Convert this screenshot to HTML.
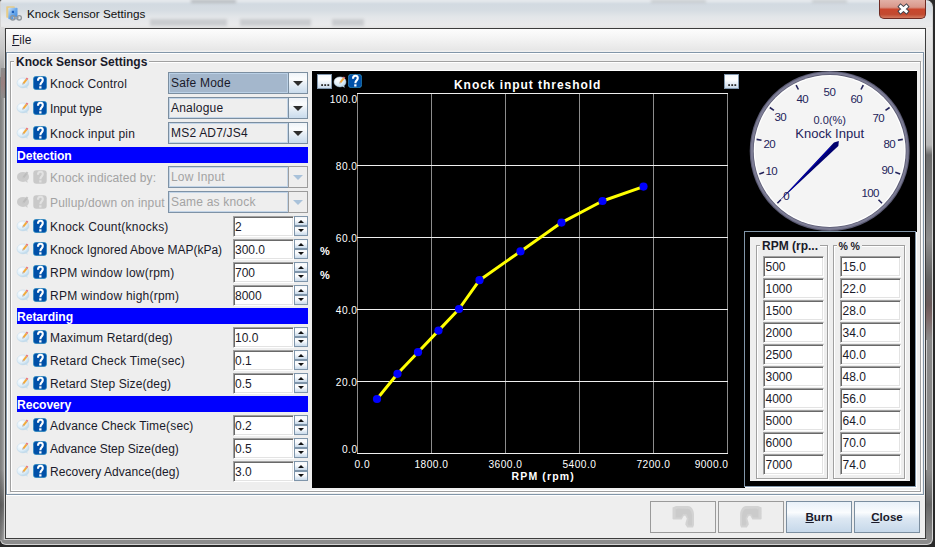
<!DOCTYPE html>
<html><head><meta charset="utf-8">
<style>
*{box-sizing:border-box;margin:0;padding:0}
body{width:935px;height:547px;overflow:hidden;position:relative;background:#2a2a2a;font-family:"Liberation Sans",sans-serif;font-size:12px;color:#000}
.a{position:absolute}
.t{position:absolute;white-space:nowrap;line-height:1}
/* frame */
#frame{left:0;top:0;width:933px;height:545px;border-radius:2px 7px 6px 6px;border:1px solid #d4d4d4;border-top-color:#e4e8ec;background:linear-gradient(180deg,#e4e8ec 0px,#d2dae1 3px,#d5dce2 9px,#e3e6e9 16px,#e9eaeb 24px,#e4e4e4 27px,#9a9a9a 34px,#8c8c8c 80px,#8a8a8a 400px,#8c8c8c 545px)}
#client{left:5px;top:28px;width:921px;height:511px;border:1px solid #3c3c3c;background:#eeeeee}
#menubar{left:6px;top:29px;width:919px;height:23px;background:linear-gradient(180deg,#fdfdfd 0%,#f4f4f4 40%,#e7e7e7 90%,#f2f2f2 100%)}
#cpane{left:6px;top:52px;width:918px;height:443px;border:1px solid #8296a9;background:#eeeeee;box-shadow:0 1px 0 #fff}
#cpane:before{content:"";position:absolute;left:0;top:0;right:0;bottom:0;border-left:1px solid #fff;border-top:1px solid #fff}
.tb{position:absolute;border:1px solid #a0a0a0;box-shadow:1px 1px 0 #fff, inset 1px 1px 0 #fff}
.hdr{position:absolute;left:17px;width:291px;height:16px;background:#0000ff;color:#fff;font-weight:bold;font-size:12.2px;line-height:18px;padding-left:0;letter-spacing:-0.1px}
.lbl{position:absolute;left:50px;white-space:nowrap;font-size:12px;line-height:14px;color:#1a1a2a}
.lbl.dis{color:#a3a3a3}
.combo{position:absolute;left:168px;width:140px;height:22px;border:1px solid #7b8ea0;background:#eeeeee}
.combo .in{position:absolute;left:0;top:0;width:119px;height:20px;border:1px solid #c3d5e8}
.combo.sel .in{background:#a4b7cc;border-color:#bad0e6}
.combo .txt{position:absolute;left:1px;top:2px;font-size:12px;line-height:14px;letter-spacing:0.2px;white-space:nowrap;color:#1a1a2a}
.combo .btn{position:absolute;left:119px;top:0;width:19px;height:20px;border-left:1px solid #7b8ea0;background:linear-gradient(180deg,#eef3f8 0%,#fbfcfd 30%,#e3ecf5 60%,#c9dbec 100%)}
.combo .btn:after{content:"";position:absolute;left:4px;top:8px;border-left:5px solid transparent;border-right:5px solid transparent;border-top:5px solid #2d2d2d}
.combo.dis{border:none;background:transparent}
.combo.dis .in{left:0;top:0;width:120px;height:22px;border:1px solid #7e92a6;border-right:none;box-shadow:inset 1px 1px 0 #c3d5e8,inset -1px -1px 0 #c3d5e8;background:#eeeeee}
.combo.dis .btn{left:120px;top:0;width:20px;height:22px;border:1px solid #9c9c9c;background:#eeeeee}
.combo.dis .btn:after{left:4px;top:8px}
.combo.dis .txt{left:2px;top:3px}
.combo.dis .btn:after{border-top-color:#a9c2da}
.combo.dis .txt{color:#a3a3a3}
.fld{position:absolute;left:233px;width:61px;height:21px;background:#fff;border:1px solid;border-color:#a0a0a0 #ffffff #ffffff #a0a0a0;box-shadow:inset 1px 1px 0 #696969,inset -1px -1px 0 #e3e3e3}
.fld .txt{position:absolute;left:1px;top:3px;font-size:12px;line-height:14px;color:#1a1a2a}
.spin{position:absolute;left:294px;width:14px;height:20px}
.spin .u,.spin .d{position:absolute;left:0;width:14px;height:10px;border:1px solid #7f95aa;background:linear-gradient(180deg,#f4f7fa 0%,#fdfdfe 35%,#e2ebf4 70%,#c9daea 100%)}
.spin .u{top:0}
.spin .d{top:10px}
.spin .u:after{content:"";position:absolute;left:3px;top:3px;border-left:3px solid transparent;border-right:3px solid transparent;border-bottom:3px solid #111}
.spin .d:after{content:"";position:absolute;left:3px;top:2px;border-left:3px solid transparent;border-right:3px solid transparent;border-top:3px solid #111}
.ic{position:absolute;left:17px;width:13px;height:13px}
.hp{position:absolute;left:33px;width:14px;height:14px}
.cell{position:absolute;width:61px;height:21px;background:#fff;border:1px solid;border-color:#a0a0a0 #ffffff #ffffff #a0a0a0;box-shadow:inset 1px 1px 0 #696969,inset -1px -1px 0 #e3e3e3}
.cell .txt{position:absolute;left:1.5px;top:3px;font-size:12px;line-height:14px;color:#1a1a2a}
.btn2{position:absolute;top:501px;width:66px;height:32px;border:1px solid #7b8ea0;background:linear-gradient(180deg,#e9f1f9 0%,#fafcfe 35%,#dde8f3 55%,#c6d8ea 100%);text-align:center;font-weight:bold;font-size:11.6px;line-height:30px;color:#1a1a2a}
.btn2.dis{border-color:#9a9a9a;background:#eeeeee}
.ax{position:absolute;color:#fff;font-size:10.2px;line-height:10px;letter-spacing:0.45px;white-space:nowrap}
.gl{position:absolute;color:#23235a;font-size:11px;line-height:11px;white-space:nowrap}
</style></head><body>

<div id="frame" class="a"></div>
<div class="a" style="left:191px;top:0px;width:45px;height:3px;background:#a8acb0;filter:blur(1.5px);opacity:0.8"></div>
<div class="a" style="left:651px;top:0px;width:55px;height:3px;background:#b4b8bc;filter:blur(1.5px);opacity:0.6"></div>
<div class="a" style="left:812px;top:0px;width:35px;height:3px;background:#b4b8bc;filter:blur(1.5px);opacity:0.6"></div>
<div class="a" style="left:150px;top:19px;width:77px;height:7px;background:#c0c3c6;filter:blur(1.5px);opacity:0.75"></div>
<div class="a" style="left:240px;top:19px;width:71px;height:7px;background:#c0c3c6;filter:blur(1.5px);opacity:0.75"></div>
<div class="a" style="left:332px;top:19px;width:32px;height:7px;background:#c0c3c6;filter:blur(1.5px);opacity:0.75"></div>
<svg class="a" style="left:5px;top:5px" width="18" height="18" viewBox="0 0 18 18"><defs><linearGradient id="tig" x1="0" y1="0" x2="1" y2="1"><stop offset="0" stop-color="#cfe4fa"/><stop offset="0.5" stop-color="#6aa8ea"/><stop offset="1" stop-color="#3d86dc"/></linearGradient></defs><rect x="1.2" y="1.3" width="8.6" height="11.4" rx="0.8" fill="#e9c878" opacity=".85"/><rect x="3.3" y="2.8" width="9.2" height="11.4" rx="0.8" fill="url(#tig)"/><rect x="6.8" y="5.8" width="2.2" height="2.2" fill="#1f5fb8"/><path d="M8 12.8 L14 12.8" stroke="#b8bcc0" stroke-width="1.8"/><circle cx="7.8" cy="12.8" r="2.2" fill="none" stroke="#8f969c" stroke-width="1.4"/><circle cx="14.2" cy="12.8" r="2.2" fill="none" stroke="#8f969c" stroke-width="1.4"/></svg>
<div class="t" style="left:27px;top:7px;font-size:11.7px;line-height:14px;color:#101010">Knock Sensor Settings</div>
<div class="a" style="left:879px;top:0;width:47px;height:19px;border:1px solid #6e2a22;border-top:none;border-radius:0 0 5px 5px;background:linear-gradient(180deg,#e2b0a6 0%,#d9978a 40%,#c9462d 52%,#c24a30 80%,#d27a60 100%)"></div>
<svg class="a" style="left:893px;top:0px" width="21" height="18" viewBox="0 0 21 18"><path d="M5.9 5.0 L15.1 13.0 M15.1 5.0 L5.9 13.0" stroke="#3a3f4a" stroke-width="4.6" stroke-linecap="butt"/><path d="M6.6 5.6 L14.4 12.4 M14.4 5.6 L6.6 12.4" stroke="#ffffff" stroke-width="2.8" stroke-linecap="butt"/></svg>
<div class="a" style="left:4px;top:28px;width:923px;height:512px;border:1px solid #cfcfcf;border-top:none"></div>
<div class="a" style="left:0px;top:27px;width:4px;height:60px;background:linear-gradient(180deg,#dadada,#c4c4c4 40%,#8c8c8c)"></div>
<div class="a" style="left:926px;top:27px;width:6px;height:213px;background:linear-gradient(180deg,#ececec 0px,#d0d0d0 60px,#b8b8b8 118px,#6c6c6c 128px,#7a7a7a 170px,#8c8c8c 213px)"></div>
<div class="a" style="left:926px;top:240px;width:6px;height:100px;background:linear-gradient(180deg,#8c8c8c,#626262 40%,#6a5a5a 65%,#7a6464 75%,#8c8c8c)"></div>
<div class="a" style="left:926px;top:470px;width:6px;height:69px;background:linear-gradient(180deg,#8c8c8c,#666 50%,#8c8c8c)"></div>
<div class="a" style="left:0px;top:77px;width:4px;height:463px;background:linear-gradient(90deg,#7c7c7c,#8a8a8a 50%,#a8a8a8)"></div>
<div class="a" style="left:0px;top:470px;width:4px;height:70px;background:linear-gradient(180deg,rgba(60,60,60,0),rgba(60,60,60,.55) 50%,rgba(60,60,60,0))"></div>
<div class="a" style="left:1px;top:68px;width:4px;height:30px;background:linear-gradient(180deg,#8c8c8c,#9a8080 50%,#8c8c8c)"></div>
<div id="client" class="a"></div>
<div id="menubar" class="a"></div>
<div class="t" style="left:12px;top:33px;font-size:12px;line-height:14px;color:#1a1a2a"><u>F</u>ile</div>
<div id="cpane" class="a"></div>
<div class="tb" style="left:10px;top:61px;width:911px;height:431px"></div>
<div class="a" style="left:11px;top:490px;width:909px;height:1px;background:#fff"></div>
<div class="t" style="left:14px;top:55px;padding:0 2px;background:#eeeeee;font-weight:bold;font-size:12px;line-height:14px;color:#1a1a2a">Knock Sensor Settings</div>
<svg class="a" style="left:16px;top:76px" width="14" height="14" viewBox="0 0 14 14"><defs><radialGradient id="bg16_76" cx="0.35" cy="0.3" r="0.8"><stop offset="0" stop-color="#ffffff"/><stop offset="0.55" stop-color="#e0eff9"/><stop offset="1" stop-color="#afd0e6"/></radialGradient></defs><ellipse cx="7" cy="6.9" rx="6" ry="5" fill="url(#bg16_76)" stroke="#c2d9e8" stroke-width="0.5"/><path d="M9.4 11 L11.5 13 L11.3 10.4Z" fill="#c9e0ee"/><g transform="translate(9.5 5.2) scale(0.85) translate(-9.5 -5.2)"><path d="M6.17 6.95 L8.03 8.45 L11.73 3.85 L9.87 2.35Z" fill="#f3aa3c"/><path d="M6.17 6.95 L8.03 8.45 L5.8 9.3Z" fill="#b0a090"/><path d="M9.87 2.35 L11.73 3.85 L12.86 2.45 L11.0 0.95Z" fill="#e8707a"/></g></svg>
<svg class="a" style="left:33px;top:76px" width="14" height="14" viewBox="0 0 14 14"><rect x="0.3" y="0.3" width="13.4" height="13.4" rx="3" fill="#0050a8" stroke="#3aa0c8" stroke-width="0.6"/><path d="M5 4.7 C5 2.6 6 1.7 7.4 1.7 C8.9 1.7 9.8 2.7 9.8 4.1 C9.8 5.4 9 6.1 8.3 6.8 C7.7 7.4 7.4 8 7.4 9.3" stroke="#ffffff" stroke-width="2.1" fill="none"/><rect x="6.2" y="10.3" width="2.3" height="2.2" fill="#ffffff"/></svg>
<div class="lbl" style="top:77px;letter-spacing:0.12px">Knock Control</div>
<div class="combo sel" style="top:72px"><div class="in"><div class="txt">Safe Mode</div></div><div class="btn"></div></div>
<svg class="a" style="left:16px;top:101px" width="14" height="14" viewBox="0 0 14 14"><defs><radialGradient id="bg16_101" cx="0.35" cy="0.3" r="0.8"><stop offset="0" stop-color="#ffffff"/><stop offset="0.55" stop-color="#e0eff9"/><stop offset="1" stop-color="#afd0e6"/></radialGradient></defs><ellipse cx="7" cy="6.9" rx="6" ry="5" fill="url(#bg16_101)" stroke="#c2d9e8" stroke-width="0.5"/><path d="M9.4 11 L11.5 13 L11.3 10.4Z" fill="#c9e0ee"/><g transform="translate(9.5 5.2) scale(0.85) translate(-9.5 -5.2)"><path d="M6.17 6.95 L8.03 8.45 L11.73 3.85 L9.87 2.35Z" fill="#f3aa3c"/><path d="M6.17 6.95 L8.03 8.45 L5.8 9.3Z" fill="#b0a090"/><path d="M9.87 2.35 L11.73 3.85 L12.86 2.45 L11.0 0.95Z" fill="#e8707a"/></g></svg>
<svg class="a" style="left:33px;top:101px" width="14" height="14" viewBox="0 0 14 14"><rect x="0.3" y="0.3" width="13.4" height="13.4" rx="3" fill="#0050a8" stroke="#3aa0c8" stroke-width="0.6"/><path d="M5 4.7 C5 2.6 6 1.7 7.4 1.7 C8.9 1.7 9.8 2.7 9.8 4.1 C9.8 5.4 9 6.1 8.3 6.8 C7.7 7.4 7.4 8 7.4 9.3" stroke="#ffffff" stroke-width="2.1" fill="none"/><rect x="6.2" y="10.3" width="2.3" height="2.2" fill="#ffffff"/></svg>
<div class="lbl" style="top:102px;letter-spacing:-0.07px">Input type</div>
<div class="combo " style="top:97px"><div class="in"><div class="txt">Analogue</div></div><div class="btn"></div></div>
<svg class="a" style="left:16px;top:126px" width="14" height="14" viewBox="0 0 14 14"><defs><radialGradient id="bg16_126" cx="0.35" cy="0.3" r="0.8"><stop offset="0" stop-color="#ffffff"/><stop offset="0.55" stop-color="#e0eff9"/><stop offset="1" stop-color="#afd0e6"/></radialGradient></defs><ellipse cx="7" cy="6.9" rx="6" ry="5" fill="url(#bg16_126)" stroke="#c2d9e8" stroke-width="0.5"/><path d="M9.4 11 L11.5 13 L11.3 10.4Z" fill="#c9e0ee"/><g transform="translate(9.5 5.2) scale(0.85) translate(-9.5 -5.2)"><path d="M6.17 6.95 L8.03 8.45 L11.73 3.85 L9.87 2.35Z" fill="#f3aa3c"/><path d="M6.17 6.95 L8.03 8.45 L5.8 9.3Z" fill="#b0a090"/><path d="M9.87 2.35 L11.73 3.85 L12.86 2.45 L11.0 0.95Z" fill="#e8707a"/></g></svg>
<svg class="a" style="left:33px;top:126px" width="14" height="14" viewBox="0 0 14 14"><rect x="0.3" y="0.3" width="13.4" height="13.4" rx="3" fill="#0050a8" stroke="#3aa0c8" stroke-width="0.6"/><path d="M5 4.7 C5 2.6 6 1.7 7.4 1.7 C8.9 1.7 9.8 2.7 9.8 4.1 C9.8 5.4 9 6.1 8.3 6.8 C7.7 7.4 7.4 8 7.4 9.3" stroke="#ffffff" stroke-width="2.1" fill="none"/><rect x="6.2" y="10.3" width="2.3" height="2.2" fill="#ffffff"/></svg>
<div class="lbl" style="top:127px;letter-spacing:0.2px">Knock input pin</div>
<div class="combo " style="top:122px"><div class="in"><div class="txt">MS2 AD7/JS4</div></div><div class="btn"></div></div>
<div class="hdr" style="top:147px">Detection</div>
<svg class="a" style="left:16px;top:170px" width="14" height="14" viewBox="0 0 14 14"><ellipse cx="7" cy="6.9" rx="6" ry="5" fill="#cbcbcb"/><path d="M9.4 11 L11.5 13 L11.3 10.4Z" fill="#cbcbcb"/><g transform="translate(9.5 5.2) scale(0.85) translate(-9.5 -5.2)"><path d="M6.17 6.95 L8.03 8.45 L11.73 3.85 L9.87 2.35Z" fill="#bcbcbc"/><path d="M6.17 6.95 L8.03 8.45 L5.8 9.3Z" fill="#c4c4c4"/><path d="M9.87 2.35 L11.73 3.85 L12.86 2.45 L11.0 0.95Z" fill="#c2c2c2"/></g></svg>
<svg class="a" style="left:33px;top:170px" width="14" height="14" viewBox="0 0 14 14"><rect x="0.3" y="0.3" width="13.4" height="13.4" rx="3" fill="#c9c9c9"/><path d="M5 4.7 C5 2.6 6 1.7 7.4 1.7 C8.9 1.7 9.8 2.7 9.8 4.1 C9.8 5.4 9 6.1 8.3 6.8 C7.7 7.4 7.4 8 7.4 9.3" stroke="#e2e2e2" stroke-width="2.1" fill="none"/><rect x="6.2" y="10.3" width="2.3" height="2.2" fill="#e2e2e2"/></svg>
<div class="lbl dis" style="top:171px;letter-spacing:0.11px">Knock indicated by:</div>
<div class="combo dis" style="top:166px"><div class="in"><div class="txt">Low Input</div></div><div class="btn"></div></div>
<svg class="a" style="left:16px;top:195px" width="14" height="14" viewBox="0 0 14 14"><ellipse cx="7" cy="6.9" rx="6" ry="5" fill="#cbcbcb"/><path d="M9.4 11 L11.5 13 L11.3 10.4Z" fill="#cbcbcb"/><g transform="translate(9.5 5.2) scale(0.85) translate(-9.5 -5.2)"><path d="M6.17 6.95 L8.03 8.45 L11.73 3.85 L9.87 2.35Z" fill="#bcbcbc"/><path d="M6.17 6.95 L8.03 8.45 L5.8 9.3Z" fill="#c4c4c4"/><path d="M9.87 2.35 L11.73 3.85 L12.86 2.45 L11.0 0.95Z" fill="#c2c2c2"/></g></svg>
<svg class="a" style="left:33px;top:195px" width="14" height="14" viewBox="0 0 14 14"><rect x="0.3" y="0.3" width="13.4" height="13.4" rx="3" fill="#c9c9c9"/><path d="M5 4.7 C5 2.6 6 1.7 7.4 1.7 C8.9 1.7 9.8 2.7 9.8 4.1 C9.8 5.4 9 6.1 8.3 6.8 C7.7 7.4 7.4 8 7.4 9.3" stroke="#e2e2e2" stroke-width="2.1" fill="none"/><rect x="6.2" y="10.3" width="2.3" height="2.2" fill="#e2e2e2"/></svg>
<div class="lbl dis" style="top:196px;letter-spacing:0.17px">Pullup/down on input</div>
<div class="combo dis" style="top:191px"><div class="in"><div class="txt">Same as knock</div></div><div class="btn"></div></div>
<svg class="a" style="left:16px;top:219px" width="14" height="14" viewBox="0 0 14 14"><defs><radialGradient id="bg16_219" cx="0.35" cy="0.3" r="0.8"><stop offset="0" stop-color="#ffffff"/><stop offset="0.55" stop-color="#e0eff9"/><stop offset="1" stop-color="#afd0e6"/></radialGradient></defs><ellipse cx="7" cy="6.9" rx="6" ry="5" fill="url(#bg16_219)" stroke="#c2d9e8" stroke-width="0.5"/><path d="M9.4 11 L11.5 13 L11.3 10.4Z" fill="#c9e0ee"/><g transform="translate(9.5 5.2) scale(0.85) translate(-9.5 -5.2)"><path d="M6.17 6.95 L8.03 8.45 L11.73 3.85 L9.87 2.35Z" fill="#f3aa3c"/><path d="M6.17 6.95 L8.03 8.45 L5.8 9.3Z" fill="#b0a090"/><path d="M9.87 2.35 L11.73 3.85 L12.86 2.45 L11.0 0.95Z" fill="#e8707a"/></g></svg>
<svg class="a" style="left:33px;top:219px" width="14" height="14" viewBox="0 0 14 14"><rect x="0.3" y="0.3" width="13.4" height="13.4" rx="3" fill="#0050a8" stroke="#3aa0c8" stroke-width="0.6"/><path d="M5 4.7 C5 2.6 6 1.7 7.4 1.7 C8.9 1.7 9.8 2.7 9.8 4.1 C9.8 5.4 9 6.1 8.3 6.8 C7.7 7.4 7.4 8 7.4 9.3" stroke="#ffffff" stroke-width="2.1" fill="none"/><rect x="6.2" y="10.3" width="2.3" height="2.2" fill="#ffffff"/></svg>
<div class="lbl" style="top:220px;letter-spacing:0.24px">Knock Count(knocks)</div>
<div class="fld" style="top:216px"><div class="txt">2</div></div>
<div class="spin" style="top:216px"><div class="u"></div><div class="d"></div></div>
<svg class="a" style="left:16px;top:242px" width="14" height="14" viewBox="0 0 14 14"><defs><radialGradient id="bg16_242" cx="0.35" cy="0.3" r="0.8"><stop offset="0" stop-color="#ffffff"/><stop offset="0.55" stop-color="#e0eff9"/><stop offset="1" stop-color="#afd0e6"/></radialGradient></defs><ellipse cx="7" cy="6.9" rx="6" ry="5" fill="url(#bg16_242)" stroke="#c2d9e8" stroke-width="0.5"/><path d="M9.4 11 L11.5 13 L11.3 10.4Z" fill="#c9e0ee"/><g transform="translate(9.5 5.2) scale(0.85) translate(-9.5 -5.2)"><path d="M6.17 6.95 L8.03 8.45 L11.73 3.85 L9.87 2.35Z" fill="#f3aa3c"/><path d="M6.17 6.95 L8.03 8.45 L5.8 9.3Z" fill="#b0a090"/><path d="M9.87 2.35 L11.73 3.85 L12.86 2.45 L11.0 0.95Z" fill="#e8707a"/></g></svg>
<svg class="a" style="left:33px;top:242px" width="14" height="14" viewBox="0 0 14 14"><rect x="0.3" y="0.3" width="13.4" height="13.4" rx="3" fill="#0050a8" stroke="#3aa0c8" stroke-width="0.6"/><path d="M5 4.7 C5 2.6 6 1.7 7.4 1.7 C8.9 1.7 9.8 2.7 9.8 4.1 C9.8 5.4 9 6.1 8.3 6.8 C7.7 7.4 7.4 8 7.4 9.3" stroke="#ffffff" stroke-width="2.1" fill="none"/><rect x="6.2" y="10.3" width="2.3" height="2.2" fill="#ffffff"/></svg>
<div class="lbl" style="top:243px;letter-spacing:0.0px">Knock Ignored Above MAP(kPa)</div>
<div class="fld" style="top:239px"><div class="txt">300.0</div></div>
<div class="spin" style="top:239px"><div class="u"></div><div class="d"></div></div>
<svg class="a" style="left:16px;top:265px" width="14" height="14" viewBox="0 0 14 14"><defs><radialGradient id="bg16_265" cx="0.35" cy="0.3" r="0.8"><stop offset="0" stop-color="#ffffff"/><stop offset="0.55" stop-color="#e0eff9"/><stop offset="1" stop-color="#afd0e6"/></radialGradient></defs><ellipse cx="7" cy="6.9" rx="6" ry="5" fill="url(#bg16_265)" stroke="#c2d9e8" stroke-width="0.5"/><path d="M9.4 11 L11.5 13 L11.3 10.4Z" fill="#c9e0ee"/><g transform="translate(9.5 5.2) scale(0.85) translate(-9.5 -5.2)"><path d="M6.17 6.95 L8.03 8.45 L11.73 3.85 L9.87 2.35Z" fill="#f3aa3c"/><path d="M6.17 6.95 L8.03 8.45 L5.8 9.3Z" fill="#b0a090"/><path d="M9.87 2.35 L11.73 3.85 L12.86 2.45 L11.0 0.95Z" fill="#e8707a"/></g></svg>
<svg class="a" style="left:33px;top:265px" width="14" height="14" viewBox="0 0 14 14"><rect x="0.3" y="0.3" width="13.4" height="13.4" rx="3" fill="#0050a8" stroke="#3aa0c8" stroke-width="0.6"/><path d="M5 4.7 C5 2.6 6 1.7 7.4 1.7 C8.9 1.7 9.8 2.7 9.8 4.1 C9.8 5.4 9 6.1 8.3 6.8 C7.7 7.4 7.4 8 7.4 9.3" stroke="#ffffff" stroke-width="2.1" fill="none"/><rect x="6.2" y="10.3" width="2.3" height="2.2" fill="#ffffff"/></svg>
<div class="lbl" style="top:266px;letter-spacing:0.24px">RPM window low(rpm)</div>
<div class="fld" style="top:262px"><div class="txt">700</div></div>
<div class="spin" style="top:262px"><div class="u"></div><div class="d"></div></div>
<svg class="a" style="left:16px;top:288px" width="14" height="14" viewBox="0 0 14 14"><defs><radialGradient id="bg16_288" cx="0.35" cy="0.3" r="0.8"><stop offset="0" stop-color="#ffffff"/><stop offset="0.55" stop-color="#e0eff9"/><stop offset="1" stop-color="#afd0e6"/></radialGradient></defs><ellipse cx="7" cy="6.9" rx="6" ry="5" fill="url(#bg16_288)" stroke="#c2d9e8" stroke-width="0.5"/><path d="M9.4 11 L11.5 13 L11.3 10.4Z" fill="#c9e0ee"/><g transform="translate(9.5 5.2) scale(0.85) translate(-9.5 -5.2)"><path d="M6.17 6.95 L8.03 8.45 L11.73 3.85 L9.87 2.35Z" fill="#f3aa3c"/><path d="M6.17 6.95 L8.03 8.45 L5.8 9.3Z" fill="#b0a090"/><path d="M9.87 2.35 L11.73 3.85 L12.86 2.45 L11.0 0.95Z" fill="#e8707a"/></g></svg>
<svg class="a" style="left:33px;top:288px" width="14" height="14" viewBox="0 0 14 14"><rect x="0.3" y="0.3" width="13.4" height="13.4" rx="3" fill="#0050a8" stroke="#3aa0c8" stroke-width="0.6"/><path d="M5 4.7 C5 2.6 6 1.7 7.4 1.7 C8.9 1.7 9.8 2.7 9.8 4.1 C9.8 5.4 9 6.1 8.3 6.8 C7.7 7.4 7.4 8 7.4 9.3" stroke="#ffffff" stroke-width="2.1" fill="none"/><rect x="6.2" y="10.3" width="2.3" height="2.2" fill="#ffffff"/></svg>
<div class="lbl" style="top:289px;letter-spacing:0.23px">RPM window high(rpm)</div>
<div class="fld" style="top:285px"><div class="txt">8000</div></div>
<div class="spin" style="top:285px"><div class="u"></div><div class="d"></div></div>
<div class="hdr" style="top:308px">Retarding</div>
<svg class="a" style="left:16px;top:330px" width="14" height="14" viewBox="0 0 14 14"><defs><radialGradient id="bg16_330" cx="0.35" cy="0.3" r="0.8"><stop offset="0" stop-color="#ffffff"/><stop offset="0.55" stop-color="#e0eff9"/><stop offset="1" stop-color="#afd0e6"/></radialGradient></defs><ellipse cx="7" cy="6.9" rx="6" ry="5" fill="url(#bg16_330)" stroke="#c2d9e8" stroke-width="0.5"/><path d="M9.4 11 L11.5 13 L11.3 10.4Z" fill="#c9e0ee"/><g transform="translate(9.5 5.2) scale(0.85) translate(-9.5 -5.2)"><path d="M6.17 6.95 L8.03 8.45 L11.73 3.85 L9.87 2.35Z" fill="#f3aa3c"/><path d="M6.17 6.95 L8.03 8.45 L5.8 9.3Z" fill="#b0a090"/><path d="M9.87 2.35 L11.73 3.85 L12.86 2.45 L11.0 0.95Z" fill="#e8707a"/></g></svg>
<svg class="a" style="left:33px;top:330px" width="14" height="14" viewBox="0 0 14 14"><rect x="0.3" y="0.3" width="13.4" height="13.4" rx="3" fill="#0050a8" stroke="#3aa0c8" stroke-width="0.6"/><path d="M5 4.7 C5 2.6 6 1.7 7.4 1.7 C8.9 1.7 9.8 2.7 9.8 4.1 C9.8 5.4 9 6.1 8.3 6.8 C7.7 7.4 7.4 8 7.4 9.3" stroke="#ffffff" stroke-width="2.1" fill="none"/><rect x="6.2" y="10.3" width="2.3" height="2.2" fill="#ffffff"/></svg>
<div class="lbl" style="top:331px;letter-spacing:0.18px">Maximum Retard(deg)</div>
<div class="fld" style="top:327px"><div class="txt">10.0</div></div>
<div class="spin" style="top:327px"><div class="u"></div><div class="d"></div></div>
<svg class="a" style="left:16px;top:353px" width="14" height="14" viewBox="0 0 14 14"><defs><radialGradient id="bg16_353" cx="0.35" cy="0.3" r="0.8"><stop offset="0" stop-color="#ffffff"/><stop offset="0.55" stop-color="#e0eff9"/><stop offset="1" stop-color="#afd0e6"/></radialGradient></defs><ellipse cx="7" cy="6.9" rx="6" ry="5" fill="url(#bg16_353)" stroke="#c2d9e8" stroke-width="0.5"/><path d="M9.4 11 L11.5 13 L11.3 10.4Z" fill="#c9e0ee"/><g transform="translate(9.5 5.2) scale(0.85) translate(-9.5 -5.2)"><path d="M6.17 6.95 L8.03 8.45 L11.73 3.85 L9.87 2.35Z" fill="#f3aa3c"/><path d="M6.17 6.95 L8.03 8.45 L5.8 9.3Z" fill="#b0a090"/><path d="M9.87 2.35 L11.73 3.85 L12.86 2.45 L11.0 0.95Z" fill="#e8707a"/></g></svg>
<svg class="a" style="left:33px;top:353px" width="14" height="14" viewBox="0 0 14 14"><rect x="0.3" y="0.3" width="13.4" height="13.4" rx="3" fill="#0050a8" stroke="#3aa0c8" stroke-width="0.6"/><path d="M5 4.7 C5 2.6 6 1.7 7.4 1.7 C8.9 1.7 9.8 2.7 9.8 4.1 C9.8 5.4 9 6.1 8.3 6.8 C7.7 7.4 7.4 8 7.4 9.3" stroke="#ffffff" stroke-width="2.1" fill="none"/><rect x="6.2" y="10.3" width="2.3" height="2.2" fill="#ffffff"/></svg>
<div class="lbl" style="top:354px;letter-spacing:0.26px">Retard Check Time(sec)</div>
<div class="fld" style="top:350px"><div class="txt">0.1</div></div>
<div class="spin" style="top:350px"><div class="u"></div><div class="d"></div></div>
<svg class="a" style="left:16px;top:376px" width="14" height="14" viewBox="0 0 14 14"><defs><radialGradient id="bg16_376" cx="0.35" cy="0.3" r="0.8"><stop offset="0" stop-color="#ffffff"/><stop offset="0.55" stop-color="#e0eff9"/><stop offset="1" stop-color="#afd0e6"/></radialGradient></defs><ellipse cx="7" cy="6.9" rx="6" ry="5" fill="url(#bg16_376)" stroke="#c2d9e8" stroke-width="0.5"/><path d="M9.4 11 L11.5 13 L11.3 10.4Z" fill="#c9e0ee"/><g transform="translate(9.5 5.2) scale(0.85) translate(-9.5 -5.2)"><path d="M6.17 6.95 L8.03 8.45 L11.73 3.85 L9.87 2.35Z" fill="#f3aa3c"/><path d="M6.17 6.95 L8.03 8.45 L5.8 9.3Z" fill="#b0a090"/><path d="M9.87 2.35 L11.73 3.85 L12.86 2.45 L11.0 0.95Z" fill="#e8707a"/></g></svg>
<svg class="a" style="left:33px;top:376px" width="14" height="14" viewBox="0 0 14 14"><rect x="0.3" y="0.3" width="13.4" height="13.4" rx="3" fill="#0050a8" stroke="#3aa0c8" stroke-width="0.6"/><path d="M5 4.7 C5 2.6 6 1.7 7.4 1.7 C8.9 1.7 9.8 2.7 9.8 4.1 C9.8 5.4 9 6.1 8.3 6.8 C7.7 7.4 7.4 8 7.4 9.3" stroke="#ffffff" stroke-width="2.1" fill="none"/><rect x="6.2" y="10.3" width="2.3" height="2.2" fill="#ffffff"/></svg>
<div class="lbl" style="top:377px;letter-spacing:0.11px">Retard Step Size(deg)</div>
<div class="fld" style="top:373px"><div class="txt">0.5</div></div>
<div class="spin" style="top:373px"><div class="u"></div><div class="d"></div></div>
<div class="hdr" style="top:396px">Recovery</div>
<svg class="a" style="left:16px;top:418px" width="14" height="14" viewBox="0 0 14 14"><defs><radialGradient id="bg16_418" cx="0.35" cy="0.3" r="0.8"><stop offset="0" stop-color="#ffffff"/><stop offset="0.55" stop-color="#e0eff9"/><stop offset="1" stop-color="#afd0e6"/></radialGradient></defs><ellipse cx="7" cy="6.9" rx="6" ry="5" fill="url(#bg16_418)" stroke="#c2d9e8" stroke-width="0.5"/><path d="M9.4 11 L11.5 13 L11.3 10.4Z" fill="#c9e0ee"/><g transform="translate(9.5 5.2) scale(0.85) translate(-9.5 -5.2)"><path d="M6.17 6.95 L8.03 8.45 L11.73 3.85 L9.87 2.35Z" fill="#f3aa3c"/><path d="M6.17 6.95 L8.03 8.45 L5.8 9.3Z" fill="#b0a090"/><path d="M9.87 2.35 L11.73 3.85 L12.86 2.45 L11.0 0.95Z" fill="#e8707a"/></g></svg>
<svg class="a" style="left:33px;top:418px" width="14" height="14" viewBox="0 0 14 14"><rect x="0.3" y="0.3" width="13.4" height="13.4" rx="3" fill="#0050a8" stroke="#3aa0c8" stroke-width="0.6"/><path d="M5 4.7 C5 2.6 6 1.7 7.4 1.7 C8.9 1.7 9.8 2.7 9.8 4.1 C9.8 5.4 9 6.1 8.3 6.8 C7.7 7.4 7.4 8 7.4 9.3" stroke="#ffffff" stroke-width="2.1" fill="none"/><rect x="6.2" y="10.3" width="2.3" height="2.2" fill="#ffffff"/></svg>
<div class="lbl" style="top:419px;letter-spacing:0.15px">Advance Check Time(sec)</div>
<div class="fld" style="top:415px"><div class="txt">0.2</div></div>
<div class="spin" style="top:415px"><div class="u"></div><div class="d"></div></div>
<svg class="a" style="left:16px;top:441px" width="14" height="14" viewBox="0 0 14 14"><defs><radialGradient id="bg16_441" cx="0.35" cy="0.3" r="0.8"><stop offset="0" stop-color="#ffffff"/><stop offset="0.55" stop-color="#e0eff9"/><stop offset="1" stop-color="#afd0e6"/></radialGradient></defs><ellipse cx="7" cy="6.9" rx="6" ry="5" fill="url(#bg16_441)" stroke="#c2d9e8" stroke-width="0.5"/><path d="M9.4 11 L11.5 13 L11.3 10.4Z" fill="#c9e0ee"/><g transform="translate(9.5 5.2) scale(0.85) translate(-9.5 -5.2)"><path d="M6.17 6.95 L8.03 8.45 L11.73 3.85 L9.87 2.35Z" fill="#f3aa3c"/><path d="M6.17 6.95 L8.03 8.45 L5.8 9.3Z" fill="#b0a090"/><path d="M9.87 2.35 L11.73 3.85 L12.86 2.45 L11.0 0.95Z" fill="#e8707a"/></g></svg>
<svg class="a" style="left:33px;top:441px" width="14" height="14" viewBox="0 0 14 14"><rect x="0.3" y="0.3" width="13.4" height="13.4" rx="3" fill="#0050a8" stroke="#3aa0c8" stroke-width="0.6"/><path d="M5 4.7 C5 2.6 6 1.7 7.4 1.7 C8.9 1.7 9.8 2.7 9.8 4.1 C9.8 5.4 9 6.1 8.3 6.8 C7.7 7.4 7.4 8 7.4 9.3" stroke="#ffffff" stroke-width="2.1" fill="none"/><rect x="6.2" y="10.3" width="2.3" height="2.2" fill="#ffffff"/></svg>
<div class="lbl" style="top:442px;letter-spacing:-0.03px">Advance Step Size(deg)</div>
<div class="fld" style="top:438px"><div class="txt">0.5</div></div>
<div class="spin" style="top:438px"><div class="u"></div><div class="d"></div></div>
<svg class="a" style="left:16px;top:464px" width="14" height="14" viewBox="0 0 14 14"><defs><radialGradient id="bg16_464" cx="0.35" cy="0.3" r="0.8"><stop offset="0" stop-color="#ffffff"/><stop offset="0.55" stop-color="#e0eff9"/><stop offset="1" stop-color="#afd0e6"/></radialGradient></defs><ellipse cx="7" cy="6.9" rx="6" ry="5" fill="url(#bg16_464)" stroke="#c2d9e8" stroke-width="0.5"/><path d="M9.4 11 L11.5 13 L11.3 10.4Z" fill="#c9e0ee"/><g transform="translate(9.5 5.2) scale(0.85) translate(-9.5 -5.2)"><path d="M6.17 6.95 L8.03 8.45 L11.73 3.85 L9.87 2.35Z" fill="#f3aa3c"/><path d="M6.17 6.95 L8.03 8.45 L5.8 9.3Z" fill="#b0a090"/><path d="M9.87 2.35 L11.73 3.85 L12.86 2.45 L11.0 0.95Z" fill="#e8707a"/></g></svg>
<svg class="a" style="left:33px;top:464px" width="14" height="14" viewBox="0 0 14 14"><rect x="0.3" y="0.3" width="13.4" height="13.4" rx="3" fill="#0050a8" stroke="#3aa0c8" stroke-width="0.6"/><path d="M5 4.7 C5 2.6 6 1.7 7.4 1.7 C8.9 1.7 9.8 2.7 9.8 4.1 C9.8 5.4 9 6.1 8.3 6.8 C7.7 7.4 7.4 8 7.4 9.3" stroke="#ffffff" stroke-width="2.1" fill="none"/><rect x="6.2" y="10.3" width="2.3" height="2.2" fill="#ffffff"/></svg>
<div class="lbl" style="top:465px;letter-spacing:0.07px">Recovery Advance(deg)</div>
<div class="fld" style="top:461px"><div class="txt">3.0</div></div>
<div class="spin" style="top:461px"><div class="u"></div><div class="d"></div></div>
<div class="a" style="left:312px;top:70px;width:605px;height:1px;background:#fff"></div>
<div class="a" style="left:312px;top:71px;width:605px;height:417px;background:#000"></div>
<svg class="a" style="left:317px;top:74px" width="15" height="15" viewBox="0 0 15 15"><defs><linearGradient id="dg317" x1="0" y1="0" x2="0" y2="1"><stop offset="0" stop-color="#f6f9fc"/><stop offset="0.35" stop-color="#ffffff"/><stop offset="1" stop-color="#c7d8ea"/></linearGradient></defs><rect x="0.5" y="0.5" width="14" height="14" fill="url(#dg317)" stroke="#8197ad"/><rect x="4.2" y="10.2" width="1.8" height="1.8" fill="#2a2a2a"/><rect x="7.3" y="10.2" width="1.8" height="1.8" fill="#2a2a2a"/><rect x="10.4" y="10.2" width="1.8" height="1.8" fill="#2a2a2a"/></svg>
<svg class="a" style="left:333px;top:75px" width="14" height="14" viewBox="0 0 14 14"><defs><radialGradient id="bg333_75" cx="0.35" cy="0.3" r="0.8"><stop offset="0" stop-color="#ffffff"/><stop offset="0.55" stop-color="#e0eff9"/><stop offset="1" stop-color="#afd0e6"/></radialGradient></defs><ellipse cx="7" cy="6.9" rx="6" ry="5" fill="url(#bg333_75)" stroke="#c2d9e8" stroke-width="0.5"/><path d="M9.4 11 L11.5 13 L11.3 10.4Z" fill="#c9e0ee"/><g transform="translate(9.5 5.2) scale(0.85) translate(-9.5 -5.2)"><path d="M6.17 6.95 L8.03 8.45 L11.73 3.85 L9.87 2.35Z" fill="#f3aa3c"/><path d="M6.17 6.95 L8.03 8.45 L5.8 9.3Z" fill="#b0a090"/><path d="M9.87 2.35 L11.73 3.85 L12.86 2.45 L11.0 0.95Z" fill="#e8707a"/></g></svg>
<svg class="a" style="left:348px;top:74px" width="14" height="14" viewBox="0 0 14 14"><rect x="0.3" y="0.3" width="13.4" height="13.4" rx="3" fill="#0050a8" stroke="#3aa0c8" stroke-width="0.6"/><path d="M5 4.7 C5 2.6 6 1.7 7.4 1.7 C8.9 1.7 9.8 2.7 9.8 4.1 C9.8 5.4 9 6.1 8.3 6.8 C7.7 7.4 7.4 8 7.4 9.3" stroke="#ffffff" stroke-width="2.1" fill="none"/><rect x="6.2" y="10.3" width="2.3" height="2.2" fill="#ffffff"/></svg>
<svg class="a" style="left:724px;top:74px" width="15" height="15" viewBox="0 0 15 15"><defs><linearGradient id="dg724" x1="0" y1="0" x2="0" y2="1"><stop offset="0" stop-color="#f6f9fc"/><stop offset="0.35" stop-color="#ffffff"/><stop offset="1" stop-color="#c7d8ea"/></linearGradient></defs><rect x="0.5" y="0.5" width="14" height="14" fill="url(#dg724)" stroke="#8197ad"/><rect x="4.2" y="10.2" width="1.8" height="1.8" fill="#2a2a2a"/><rect x="7.3" y="10.2" width="1.8" height="1.8" fill="#2a2a2a"/><rect x="10.4" y="10.2" width="1.8" height="1.8" fill="#2a2a2a"/></svg>
<div class="t" style="left:454px;top:79px;color:#fff;font-weight:bold;font-size:12px;line-height:12px;letter-spacing:0.95px">Knock input threshold</div>
<svg class="a" style="left:0;top:0" width="935" height="547" viewBox="0 0 935 547" shape-rendering="crispEdges"><rect x="431" y="93" width="1" height="360" fill="#8c8c8c"/><rect x="505" y="93" width="1" height="360" fill="#8c8c8c"/><rect x="579" y="93" width="1" height="360" fill="#8c8c8c"/><rect x="653" y="93" width="1" height="360" fill="#8c8c8c"/><rect x="357" y="93" width="1" height="360" fill="#8c8c8c"/><rect x="727" y="93" width="1" height="361" fill="#8c8c8c"/><rect x="357" y="453" width="371" height="1" fill="#eeeeee"/><rect x="357" y="381" width="371" height="1" fill="#eeeeee"/><rect x="357" y="309" width="371" height="1" fill="#eeeeee"/><rect x="357" y="237" width="371" height="1" fill="#eeeeee"/><rect x="357" y="165" width="371" height="1" fill="#eeeeee"/><rect x="357" y="93" width="371" height="1" fill="#eeeeee"/></svg>
<svg class="a" style="left:0;top:0" width="935" height="547" viewBox="0 0 935 547"><path d="M377.0 399.0 L397.5 373.8 L418.0 352.2 L438.5 330.6 L459.0 309.0 L479.5 280.2 L520.5 251.4 L561.5 222.6 L602.5 201.0 L643.5 186.6" stroke="#ffff00" stroke-width="3" fill="none" stroke-linejoin="round"/><circle cx="377.00" cy="399.00" r="4.1" fill="#0000ff"/><circle cx="397.50" cy="373.80" r="4.1" fill="#0000ff"/><circle cx="418.00" cy="352.20" r="4.1" fill="#0000ff"/><circle cx="438.50" cy="330.60" r="4.1" fill="#0000ff"/><circle cx="459.00" cy="309.00" r="4.1" fill="#0000ff"/><circle cx="479.50" cy="280.20" r="4.1" fill="#0000ff"/><circle cx="520.50" cy="251.40" r="4.1" fill="#0000ff"/><circle cx="561.50" cy="222.60" r="4.1" fill="#0000ff"/><circle cx="602.50" cy="201.00" r="4.1" fill="#0000ff"/><circle cx="643.50" cy="186.60" r="4.1" fill="#0000ff"/></svg>
<div class="ax" style="left:297.5px;width:60px;text-align:right;top:95px">100.0</div>
<div class="ax" style="left:297.5px;width:60px;text-align:right;top:162px">80.0</div>
<div class="ax" style="left:297.5px;width:60px;text-align:right;top:234px">60.0</div>
<div class="ax" style="left:297.5px;width:60px;text-align:right;top:306px">40.0</div>
<div class="ax" style="left:297.5px;width:60px;text-align:right;top:378px">20.0</div>
<div class="ax" style="left:297.5px;width:60px;text-align:right;top:445px">0.0</div>
<div class="ax" style="left:354.5px;top:460px">0.0</div>
<div class="ax" style="left:391.45px;width:80px;text-align:center;top:460px">1800.0</div>
<div class="ax" style="left:465.45px;width:80px;text-align:center;top:460px">3600.0</div>
<div class="ax" style="left:539.45px;width:80px;text-align:center;top:460px">5400.0</div>
<div class="ax" style="left:613.45px;width:80px;text-align:center;top:460px">7200.0</div>
<div class="ax" style="left:648.5px;width:80px;text-align:right;top:460px">9000.0</div>
<div class="t" style="left:511.5px;top:471px;color:#fff;font-weight:bold;font-size:10.5px;line-height:10px;letter-spacing:1.15px">RPM (rpm)</div>
<div class="t" style="left:320px;top:246px;color:#fff;font-weight:bold;font-size:11px;line-height:10px">%</div>
<div class="t" style="left:320px;top:270px;color:#fff;font-weight:bold;font-size:11px;line-height:10px">%</div>
<svg class="a" style="left:0;top:0" width="935" height="547" viewBox="0 0 935 547"><defs><linearGradient id="ring" x1="0" y1="0" x2="1" y2="1"><stop offset="0" stop-color="#9696a8"/><stop offset="0.5" stop-color="#6c6c84"/><stop offset="1" stop-color="#9a9aac"/></linearGradient></defs><circle cx="829.7" cy="151.0" r="80.0" fill="#5a5a72"/><circle cx="829.7" cy="151.0" r="77.8" fill="none" stroke="#7c7c94" stroke-width="2.2"/><circle cx="829.7" cy="151.0" r="76.0" fill="#ffffff"/><circle cx="829.7" cy="151.0" r="74.7" fill="#f4f4f4"/><line x1="780.9" y1="199.8" x2="777.4" y2="203.3" stroke="#23235a" stroke-width="1.6"/><line x1="764.1" y1="172.3" x2="759.3" y2="173.9" stroke="#23235a" stroke-width="1.6"/><line x1="761.5" y1="140.2" x2="756.6" y2="139.4" stroke="#23235a" stroke-width="1.6"/><line x1="773.9" y1="110.4" x2="769.8" y2="107.5" stroke="#23235a" stroke-width="1.6"/><line x1="798.4" y1="89.5" x2="796.1" y2="85.1" stroke="#23235a" stroke-width="1.6"/><line x1="861.0" y1="89.5" x2="863.3" y2="85.1" stroke="#23235a" stroke-width="1.6"/><line x1="885.5" y1="110.4" x2="889.6" y2="107.5" stroke="#23235a" stroke-width="1.6"/><line x1="897.9" y1="140.2" x2="902.8" y2="139.4" stroke="#23235a" stroke-width="1.6"/><line x1="895.3" y1="172.3" x2="900.1" y2="173.9" stroke="#23235a" stroke-width="1.6"/><line x1="878.5" y1="199.8" x2="882.0" y2="203.3" stroke="#23235a" stroke-width="1.6"/></svg>
<div class="gl" style="left:766.20px;width:40px;text-align:center;top:189.80px;font-size:11.5px;line-height:12px;letter-spacing:-0.6px">0</div>
<div class="gl" style="left:751.30px;width:40px;text-align:center;top:164.60px;font-size:11.5px;line-height:12px;letter-spacing:-0.6px">10</div>
<div class="gl" style="left:749.30px;width:40px;text-align:center;top:137.50px;font-size:11.5px;line-height:12px;letter-spacing:-0.6px">20</div>
<div class="gl" style="left:760.20px;width:40px;text-align:center;top:111.40px;font-size:11.5px;line-height:12px;letter-spacing:-0.6px">30</div>
<div class="gl" style="left:782.20px;width:40px;text-align:center;top:92.50px;font-size:11.5px;line-height:12px;letter-spacing:-0.6px">40</div>
<div class="gl" style="left:809.40px;width:40px;text-align:center;top:85.50px;font-size:11.5px;line-height:12px;letter-spacing:-0.6px">50</div>
<div class="gl" style="left:836.20px;width:40px;text-align:center;top:92.50px;font-size:11.5px;line-height:12px;letter-spacing:-0.6px">60</div>
<div class="gl" style="left:858.30px;width:40px;text-align:center;top:111.50px;font-size:11.5px;line-height:12px;letter-spacing:-0.6px">70</div>
<div class="gl" style="left:869.20px;width:40px;text-align:center;top:137.70px;font-size:11.5px;line-height:12px;letter-spacing:-0.6px">80</div>
<div class="gl" style="left:867.30px;width:40px;text-align:center;top:164.30px;font-size:11.5px;line-height:12px;letter-spacing:-0.6px">90</div>
<div class="gl" style="left:850.20px;width:40px;text-align:center;top:187.40px;font-size:11.5px;line-height:12px;letter-spacing:-0.6px">100</div>
<div class="gl" style="left:789.7px;width:80px;text-align:center;top:115px">0.0(%)</div>
<div class="gl" style="left:779.7px;width:100px;text-align:center;top:127px;font-size:13px;line-height:13px">Knock Input</div>
<svg class="a" style="left:0;top:0" width="935" height="547" viewBox="0 0 935 547"><path d="M776.8 203.6 L834.0 142.4 L838.9 141.0 L838.3 145.9 Z" fill="#00006e"/><path d="M790 190.5 L831 147" stroke="#0000e0" stroke-width="0.9" opacity=".8"/></svg>
<div class="a" style="left:744px;top:231px;width:172px;height:256px;border:1px solid #8296a9;box-shadow:1px 1px 0 #fff"></div>
<div class="a" style="left:750px;top:237px;width:160px;height:244px;background:#eeeeee;border-left:0;"></div>
<div class="tb" style="left:756px;top:245px;width:72px;height:234px"></div>
<div class="tb" style="left:833px;top:245px;width:72px;height:234px"></div>
<div class="t" style="left:760px;top:240px;padding:0 2px;background:#eeeeee;font-weight:bold;font-size:12px;line-height:13px;color:#1a1a2a">RPM (rp...</div>
<div class="t" style="left:837px;top:240px;width:25px;height:13px;background:#eeeeee"></div><div class="t" style="left:838.5px;top:240px;font-weight:bold;font-size:10.6px;line-height:13px;color:#1a1a2a">%</div><div class="t" style="left:850.5px;top:240px;font-weight:bold;font-size:10.6px;line-height:13px;color:#1a1a2a">%</div>
<div class="cell" style="left:763px;top:256px"><div class="txt">500</div></div>
<div class="cell" style="left:840px;top:256px"><div class="txt">15.0</div></div>
<div class="cell" style="left:763px;top:278px"><div class="txt">1000</div></div>
<div class="cell" style="left:840px;top:278px"><div class="txt">22.0</div></div>
<div class="cell" style="left:763px;top:300px"><div class="txt">1500</div></div>
<div class="cell" style="left:840px;top:300px"><div class="txt">28.0</div></div>
<div class="cell" style="left:763px;top:322px"><div class="txt">2000</div></div>
<div class="cell" style="left:840px;top:322px"><div class="txt">34.0</div></div>
<div class="cell" style="left:763px;top:344px"><div class="txt">2500</div></div>
<div class="cell" style="left:840px;top:344px"><div class="txt">40.0</div></div>
<div class="cell" style="left:763px;top:366px"><div class="txt">3000</div></div>
<div class="cell" style="left:840px;top:366px"><div class="txt">48.0</div></div>
<div class="cell" style="left:763px;top:388px"><div class="txt">4000</div></div>
<div class="cell" style="left:840px;top:388px"><div class="txt">56.0</div></div>
<div class="cell" style="left:763px;top:410px"><div class="txt">5000</div></div>
<div class="cell" style="left:840px;top:410px"><div class="txt">64.0</div></div>
<div class="cell" style="left:763px;top:432px"><div class="txt">6000</div></div>
<div class="cell" style="left:840px;top:432px"><div class="txt">70.0</div></div>
<div class="cell" style="left:763px;top:454px"><div class="txt">7000</div></div>
<div class="cell" style="left:840px;top:454px"><div class="txt">74.0</div></div>
<div class="btn2 dis" style="left:650px"></div>
<div class="btn2 dis" style="left:718px"></div>
<svg class="a" style="left:668px;top:503px" width="32" height="28" viewBox="0 0 32 28"><g transform="translate(30.1 0) scale(-1 1)"><path d="M10.2 3.1 L22 3.1 L25.6 4.6 L25.6 15.9 L24.6 16.4 L16.4 16.4 L14.3 12.8 L12.8 12.8 L11.3 15.4 L12.5 19.5 L12.8 21.5 L10.8 24.6 L5.1 24.6 L4.1 22 L4.1 11.3 C4.1 7 7 3.1 10.2 3.1 Z" fill="#d3d3d3"/><path d="M9 6 C6.5 8 6 11 6 14 L6 22.5 L9.5 22.5 L10.5 20 L9.5 15.5 L11.5 11.3 L15 11 L17 14.5 L22.5 14.5 L22.5 5.5 L21.5 6.5 L20.5 5.5 Z" fill="#c9c9c9" opacity=".8"/></g></svg>
<svg class="a" style="left:736px;top:503px" width="32" height="28" viewBox="0 0 32 28"><path d="M10.2 3.1 L22 3.1 L25.6 4.6 L25.6 15.9 L24.6 16.4 L16.4 16.4 L14.3 12.8 L12.8 12.8 L11.3 15.4 L12.5 19.5 L12.8 21.5 L10.8 24.6 L5.1 24.6 L4.1 22 L4.1 11.3 C4.1 7 7 3.1 10.2 3.1 Z" fill="#d3d3d3"/><path d="M9 6 C6.5 8 6 11 6 14 L6 22.5 L9.5 22.5 L10.5 20 L9.5 15.5 L11.5 11.3 L15 11 L17 14.5 L22.5 14.5 L22.5 5.5 L21.5 6.5 L20.5 5.5 Z" fill="#c9c9c9" opacity=".8"/></svg>
<div class="btn2" style="left:786px"><u>B</u>urn</div>
<div class="btn2" style="left:854px"><u>C</u>lose</div>
</body></html>
